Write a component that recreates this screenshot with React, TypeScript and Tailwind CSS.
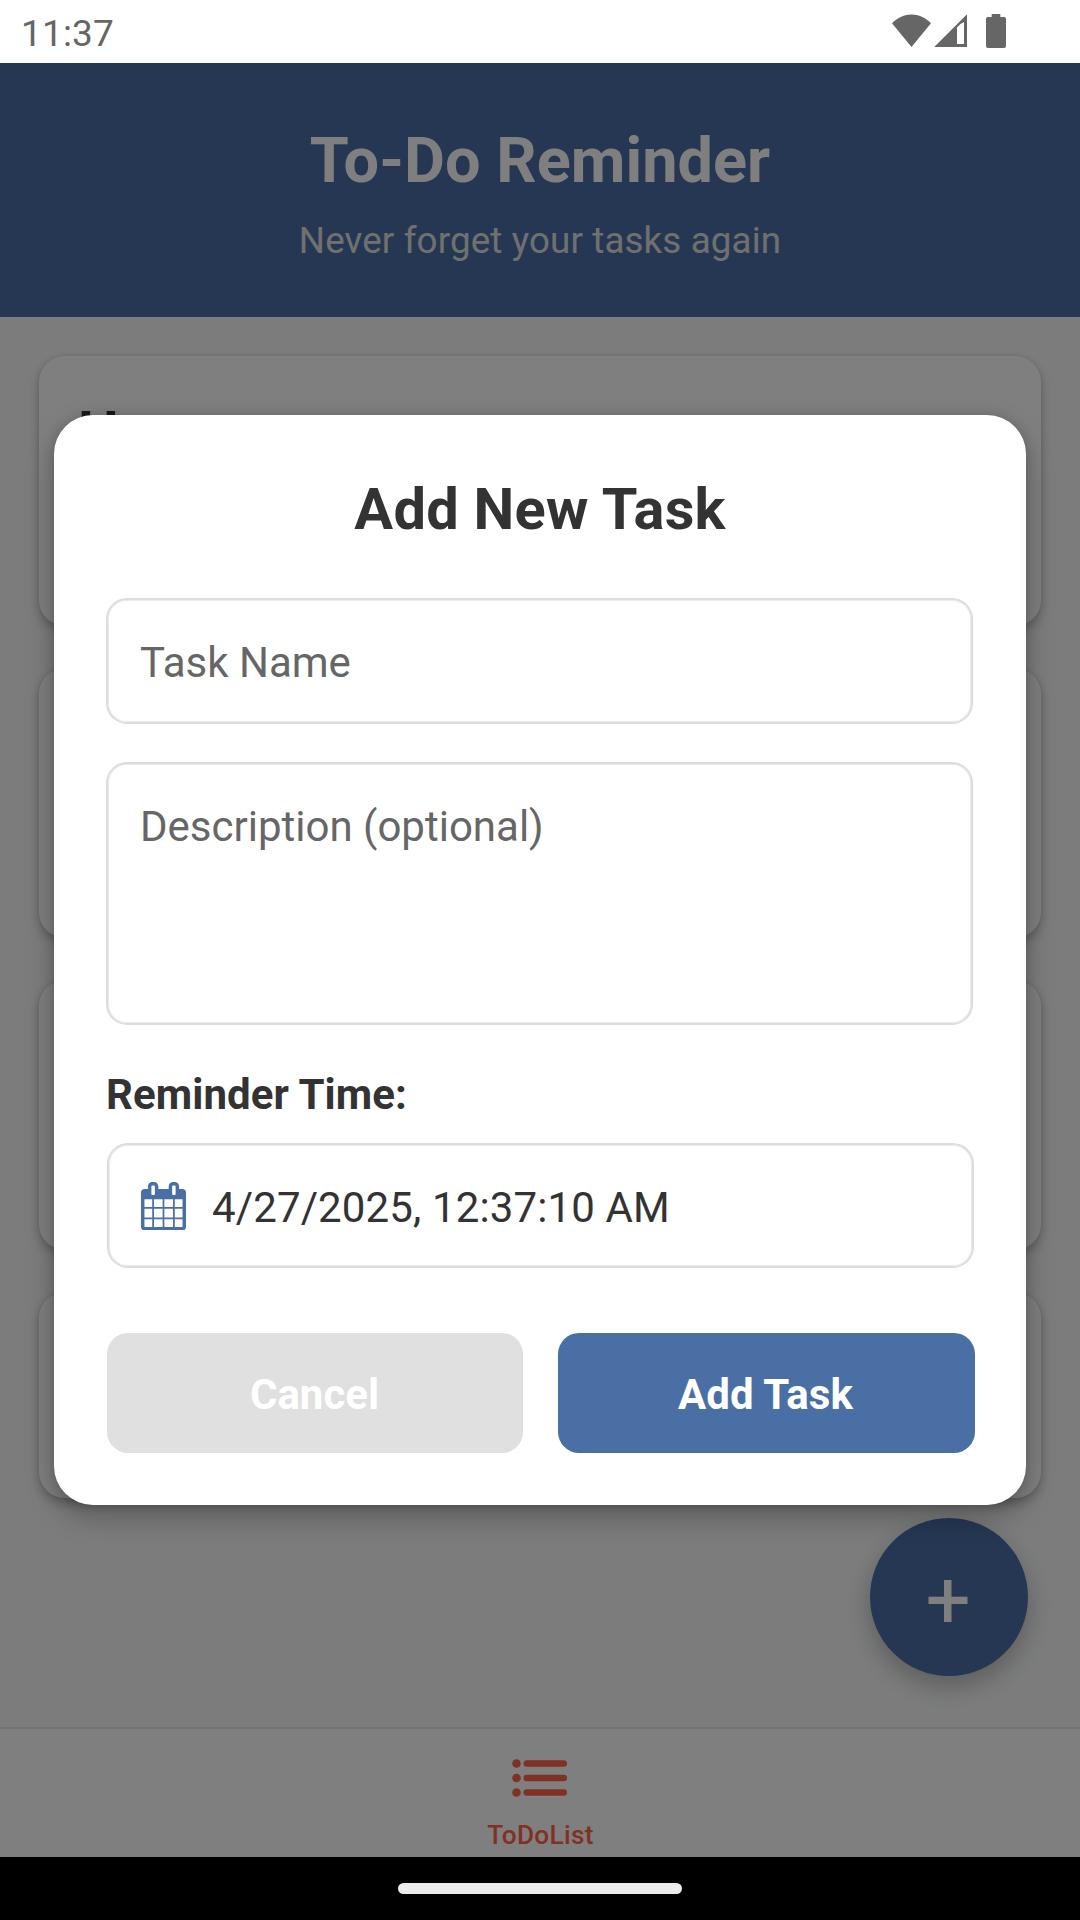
import React from 'react';

const cards = [
  { title: 'H', height: 'h-[270px]' },
  { title: '', height: 'h-[270px]' },
  { title: '', height: 'h-[270px]' },
  { title: '', height: 'h-[206px]' },
];

function StatusBar() {
  return (
    <div className="flex h-[63px] items-center justify-between bg-white pr-[72px] pl-[21px] text-[#666666]">
      <span className="pt-[5px] text-[37px] leading-[44px] tracking-[0.15px]">11:37</span>
      <svg width="116" height="36" viewBox="0 0 116 36" fill="currentColor" className="mb-[1px]">
        <path d="M0 10.3 C11 -1.4 28 -1.4 39 10.3 L19.5 34 Z" />
        <path fillRule="evenodd" d="M42.2 34 L75 1.2 V34 Z M65 14.5 V31 H72 V9 Q68 10.5 65 14.5 Z" />
        <rect x="94" y="4" width="20" height="31" rx="2" />
        <rect x="99.700" y="1" width="8.600" height="5" />
      </svg>
    </div>
  );
}

function CalendarIcon() {
  return (
    <svg width="45" height="48.500" viewBox="0 0 1664 1792" fill="#4a6fa5" className="mt-[1px]">
      <path d="M128 1664h288v-288h-288v288zm352 0h320v-288h-320v288zm-352-352h288v-320h-288v320zm352 0h320v-320h-320v320zm-352-384h288v-288h-288v288zm736 736h320v-288h-320v288zm-384-736h320v-288h-320v288zm768 736h288v-288h-288v288zm-384-352h320v-320h-320v320zm-352-864v-288q0-13-9.5-22.5t-22.5-9.5h-64q-13 0-22.5 9.5t-9.5 22.5v288q0 13 9.5 22.5t22.5 9.5h64q13 0 22.5-9.5t9.5-22.5zm736 864h288v-320h-288v320zm-384-384h320v-288h-320v288zm384 0h288v-288h-288v288zm32-480v-288q0-13-9.5-22.5t-22.5-9.5h-64q-13 0-22.5 9.5t-9.5 22.5v288q0 13 9.5 22.5t22.5 9.5h64q13 0 22.5-9.5t9.5-22.5zm384-64v1280q0 52-38 90t-90 38h-1408q-52 0-90-38t-38-90v-1280q0-52 38-90t90-38h128v-96q0-66 47-113t113-47h64q66 0 113 47t47 113v96h384v-96q0-66 47-113t113-47h64q66 0 113 47t47 113v96h128q52 0 90 38t38 90z" />
    </svg>
  );
}

function ListIcon() {
  return (
    <svg width="56" height="38" viewBox="0 0 56 38" fill="#ff6347">
      <circle cx="4.500" cy="4.500" r="4.300" />
      <circle cx="4.500" cy="19" r="4.300" />
      <circle cx="4.500" cy="33.500" r="4.300" />
      <rect x="11.500" y="1.300" width="43.500" height="6.500" rx="3.250" />
      <rect x="11.500" y="15.800" width="43.500" height="6.500" rx="3.250" />
      <rect x="11.500" y="30.300" width="43.500" height="6.500" rx="3.250" />
    </svg>
  );
}

function TaskScreen() {
  return (
    <div className="relative flex h-full flex-col bg-[#f8f9fa]">
      <header className="flex h-[254px] shrink-0 flex-col items-center bg-[#4a6fa5] pt-[61px]">
        <h1 className="text-[63px] leading-[74px] font-bold tracking-[0.05px] text-white">To-Do Reminder</h1>
        <p className="mt-[21px] text-[36.75px] leading-[43px] tracking-[0.13px] text-[#e0e0e0]">
          Never forget your tasks again
        </p>
      </header>
      <main className="flex flex-1 flex-col gap-[42px] px-[39px] pt-[39px]">
        {cards.map((card, i) => (
          <div
            key={i}
            className={`${card.height} shrink-0 rounded-[26px] bg-white pt-[42px] pl-[39px] text-[57.75px] leading-[68px] font-bold text-[#333333] shadow-[0_5px_12px_rgba(0,0,0,0.24),0_0_5px_rgba(0,0,0,0.08)]`}
          >
            {card.title}
          </div>
        ))}
      </main>
      <div className="absolute right-[52px] bottom-[181px] flex size-[158px] items-center justify-center rounded-full bg-[#4a6fa5] shadow-[0_10px_26px_rgba(0,0,0,0.26)]">
        <svg width="40" height="42" viewBox="0 0 40 42" fill="#fff" className="mt-[8px] mr-[2px]">
          <rect x="16" y="0" width="7.500" height="42" />
          <rect x="0.500" y="16.700" width="39" height="7.300" />
        </svg>
      </div>
      <nav className="flex h-[130px] shrink-0 flex-col items-center border-t-2 border-[#e8e8e8] bg-white pt-[30px] text-[#ff6347]">
        <ListIcon />
        <span className="mt-[23px] pl-[1px] text-[26.250px] leading-[31px] font-medium tracking-[0.3px]">ToDoList</span>
      </nav>
    </div>
  );
}

function AddTaskDialog() {
  return (
    <div className="flex h-[1090px] w-[972px] flex-col rounded-[39px] bg-white px-[52px] pt-[55px] text-[42px] leading-[50px] text-[#333333] shadow-[0_12px_28px_rgba(0,0,0,0.26),0_0_12px_rgba(0,0,0,0.12)]">
      <h2 className="text-center text-[57.75px] leading-[78px] font-bold tracking-[0.25px]">Add New Task</h2>
      <div className="mt-[50px] h-[126px] w-[867px] rounded-[21px] border-2 border-[#dddddd] pt-[38px] pl-[32px] text-[#666666] shadow-[inset_0_0_0_1px_#ececec]">
        Task Name
      </div>
      <div className="mt-[38px] h-[263px] w-[867px] rounded-[21px] border-2 border-[#dddddd] pt-[38px] pl-[32px] text-[#666666] shadow-[inset_0_0_0_1px_#ececec]">
        Description (optional)
      </div>
      <div className="mt-[45px] font-bold tracking-[0.08px]">Reminder Time:</div>
      <div className="mt-[23px] ml-[1px] flex h-[125px] w-[867px] items-center rounded-[21px] border-2 border-[#dddddd] pl-[32px] shadow-[inset_0_0_0_1px_#ececec]">
        <CalendarIcon />
        <span className="pt-[4px] pl-[26px] tracking-[0.13px]">4/27/2025, 12:37:10 AM</span>
      </div>
      <div className="mt-[65px] ml-[1px] flex w-[868px] gap-[35px] font-bold text-white">
        <div className="flex h-[120px] w-[416px] items-center justify-center rounded-[21px] bg-[#e0e0e0] pt-[3px] pr-[1px]">
          Cancel
        </div>
        <div className="flex h-[120px] w-[417px] items-center justify-center rounded-[21px] bg-[#4a6fa5] pt-[3px] pr-[2px] tracking-[0.08px]">
          Add Task
        </div>
      </div>
    </div>
  );
}

export default function App() {
  return (
    <div className="flex h-[1920px] w-[1080px] flex-col overflow-hidden bg-black font-['Roboto',sans-serif]">
      <StatusBar />
      <div className="relative h-[1794px] overflow-hidden">
        <TaskScreen />
        <div className="absolute inset-0 flex items-center justify-center bg-black/50">
          <AddTaskDialog />
        </div>
      </div>
      <div className="flex h-[63px] items-center justify-center">
        <div className="h-[11px] w-[284px] rounded-full bg-[#ebebeb]" />
      </div>
    </div>
  );
}
